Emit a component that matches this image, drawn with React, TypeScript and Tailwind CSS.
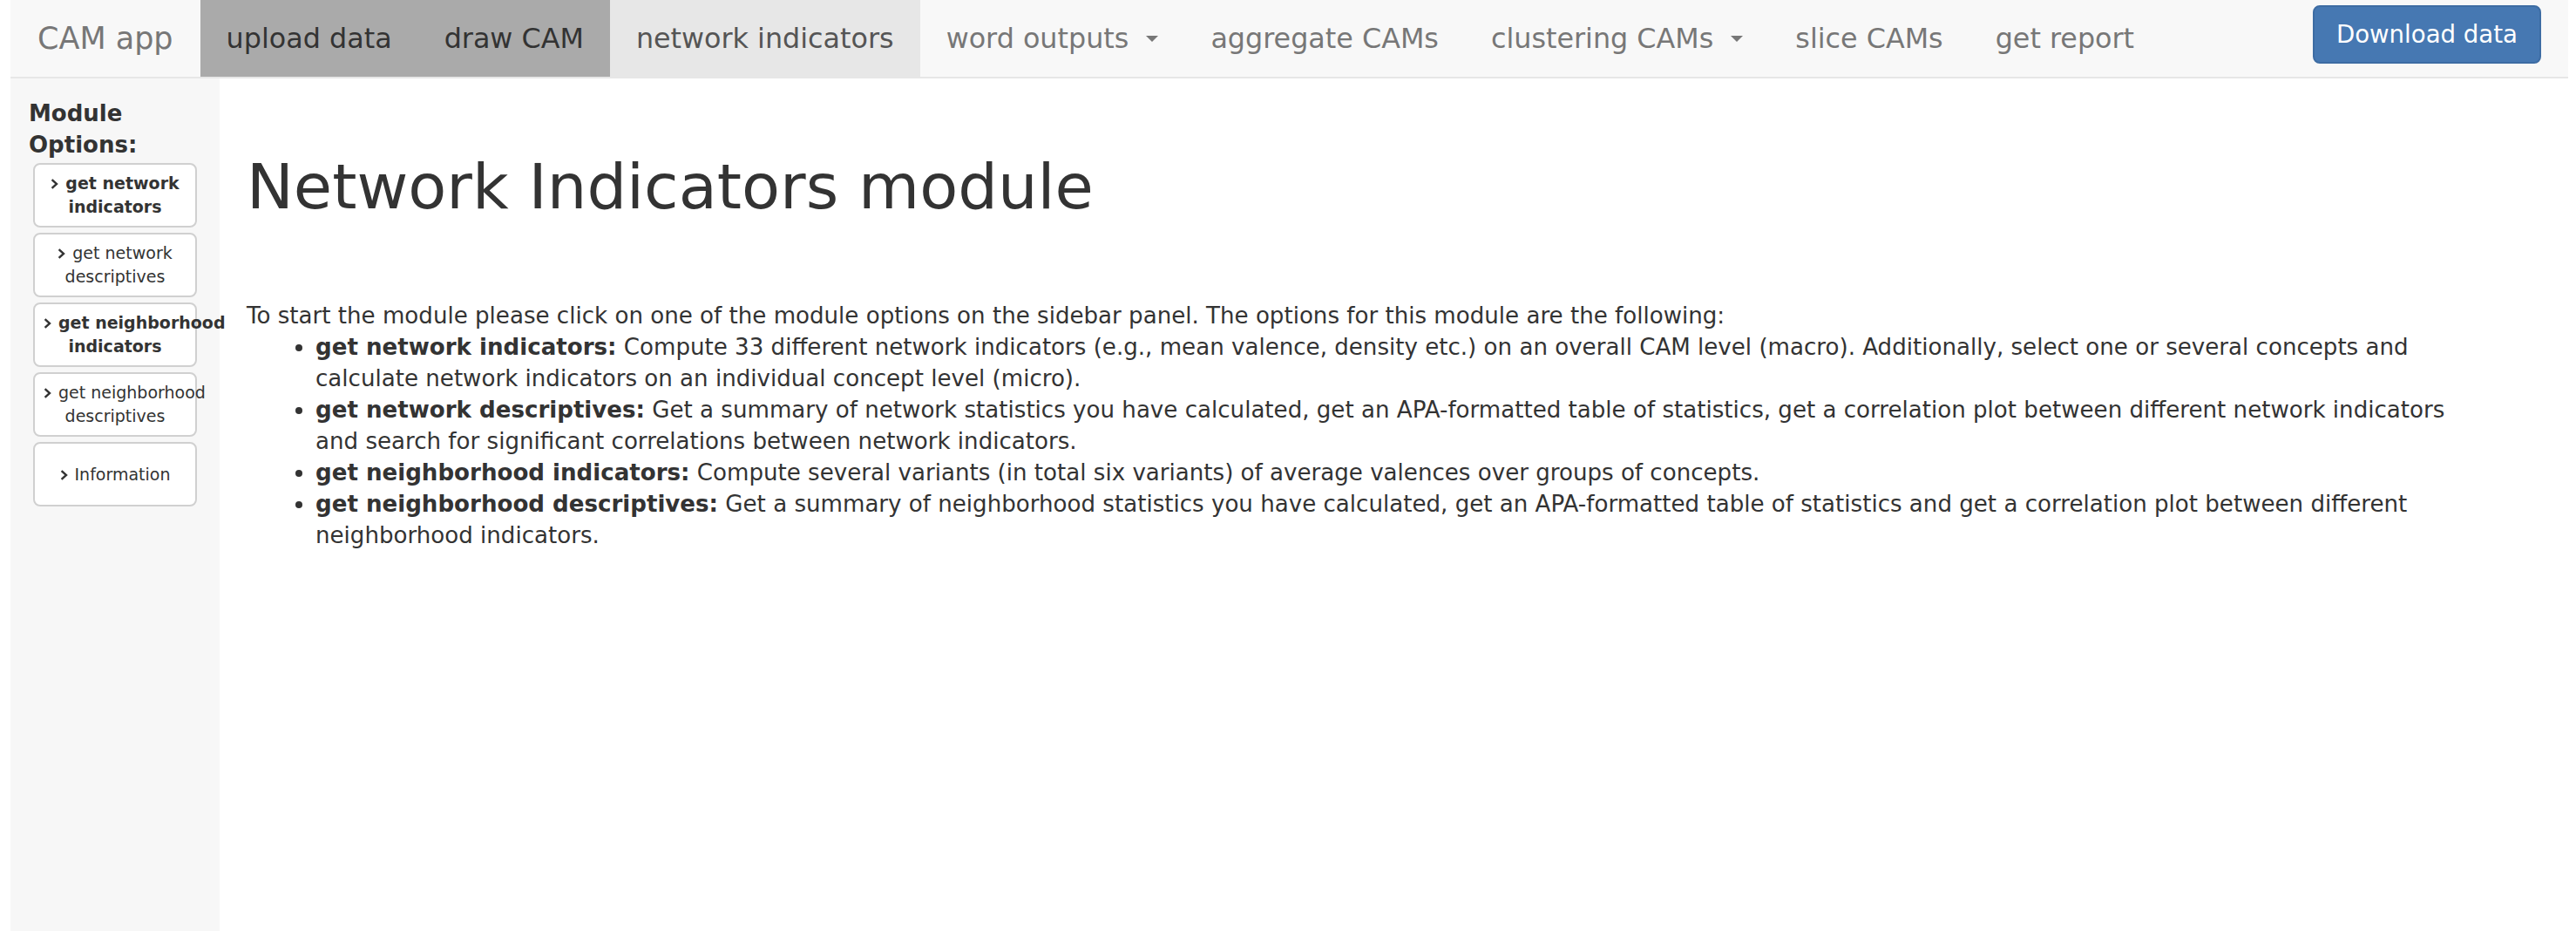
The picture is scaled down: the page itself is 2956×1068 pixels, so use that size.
import React from "react";

const NAV = [
  { label: "upload data", bg: "bg-[#aaaaaa] text-[#333]" },
  { label: "draw CAM", bg: "bg-[#aaaaaa] text-[#333]" },
  { label: "network indicators", bg: "bg-[#e7e7e7] text-[#555]" },
  { label: "word outputs", caret: true },
  { label: "aggregate CAMs" },
  { label: "clustering CAMs", caret: true },
  { label: "slice CAMs" },
  { label: "get report" },
];

const OPTIONS = [
  { lines: ["get network", "indicators"], bold: true },
  { lines: ["get network", "descriptives"] },
  { lines: ["get neighborhood", "indicators"], bold: true },
  { lines: ["get neighborhood", "descriptives"] },
  { lines: ["Information"] },
];

const ITEMS = [
  {
    title: "get network indicators:",
    text: "Compute 33 different network indicators (e.g., mean valence, density etc.) on an overall CAM level (macro). Additionally, select one or several concepts and calculate network indicators on an individual concept level (micro).",
  },
  {
    title: "get network descriptives:",
    text: "Get a summary of network statistics you have calculated, get an APA-formatted table of statistics, get a correlation plot between different network indicators and search for significant correlations between network indicators.",
  },
  {
    title: "get neighborhood indicators:",
    text: "Compute several variants (in total six variants) of average valences over groups of concepts.",
  },
  {
    title: "get neighborhood descriptives:",
    text: "Get a summary of neighborhood statistics you have calculated, get an APA-formatted table of statistics and get a correlation plot between different neighborhood indicators.",
  },
];

function Chevron() {
  return (
    <svg viewBox="0 0 9 12" className="mr-[8px] inline-block h-[12px] w-[9px] align-baseline">
      <path d="M1.6 1.2 L7 6 L1.6 10.8" fill="none" stroke="#333" strokeWidth="2.4" />
    </svg>
  );
}

function Caret() {
  return (
    <span className="ml-[20px] inline-block h-0 w-0 border-x-[7px] border-t-[7px] border-x-transparent border-t-[#777] align-middle" />
  );
}

export default function App() {
  return (
    <div className="flex min-h-[1068px] flex-col bg-white pl-[12px] pr-[9px] font-['DejaVu_Sans',Verdana,sans-serif] text-[#333]">
      {/* navbar */}
      <nav className="flex h-[90px] items-start border-b-2 border-[#e7e7e7] bg-[#f8f8f8]">
        <div className="flex h-[88px] items-center px-[31px] text-[35px] text-[#777]">CAM app</div>
        <ul className="flex h-[88px]">
          {NAV.map((n) => (
            <li
              key={n.label}
              className={`flex h-[88px] items-center whitespace-nowrap px-[30px] text-[31.8px] ${n.bg ?? "text-[#777]"}`}
            >
              {n.label}
              {n.caret && <Caret />}
            </li>
          ))}
        </ul>
        <div className="ml-auto pr-[31px] pt-[6px]">
          <button className="h-[67px] rounded-[8px] border-2 border-[#3d6ca3] bg-[#4678b2] px-[25px] text-[27.6px] text-white">
            Download data
          </button>
        </div>
      </nav>

      <div className="flex flex-1">
        {/* sidebar */}
        <aside className="w-[240px] shrink-0 bg-[#f7f7f7] pt-[22px]">
          <div className="pl-[21px] text-[26px] font-bold leading-[36px]">
            Module
            <br />
            Options:
          </div>
          <div className="mt-[3px] flex flex-col items-center gap-[6px]">
            {OPTIONS.map((o, i) => (
              <button
                key={i}
                className={`flex h-[74px] w-[188px] flex-col justify-center rounded-[8px] border-2 border-[#d0d0d0] bg-white px-[10px] text-[19px] leading-[27px] text-[#333] ${o.bold ? "font-bold" : ""}`}
              >
                {o.lines.map((l, j) => (
                  <div key={j} className="whitespace-nowrap text-center">
                    {j === 0 && <Chevron />}
                    {l}
                  </div>
                ))}
              </button>
            ))}
          </div>
        </aside>

        {/* main */}
        <main className="flex-1 pl-[31px] pr-[117px] pt-[84px]">
          <h1 className="text-[72px] leading-[80px]">Network Indicators module</h1>
          <div className="mt-[90px] text-[26.1px] leading-[36px]">
            <p>
              To start the module please click on one of the module options on the sidebar panel. The options for this module are the following:
            </p>
            <ul className="list-disc pl-[79px]">
              {ITEMS.map((it) => (
                <li key={it.title}>
                  <b>{it.title}</b> {it.text}
                </li>
              ))}
            </ul>
          </div>
        </main>
      </div>
    </div>
  );
}
